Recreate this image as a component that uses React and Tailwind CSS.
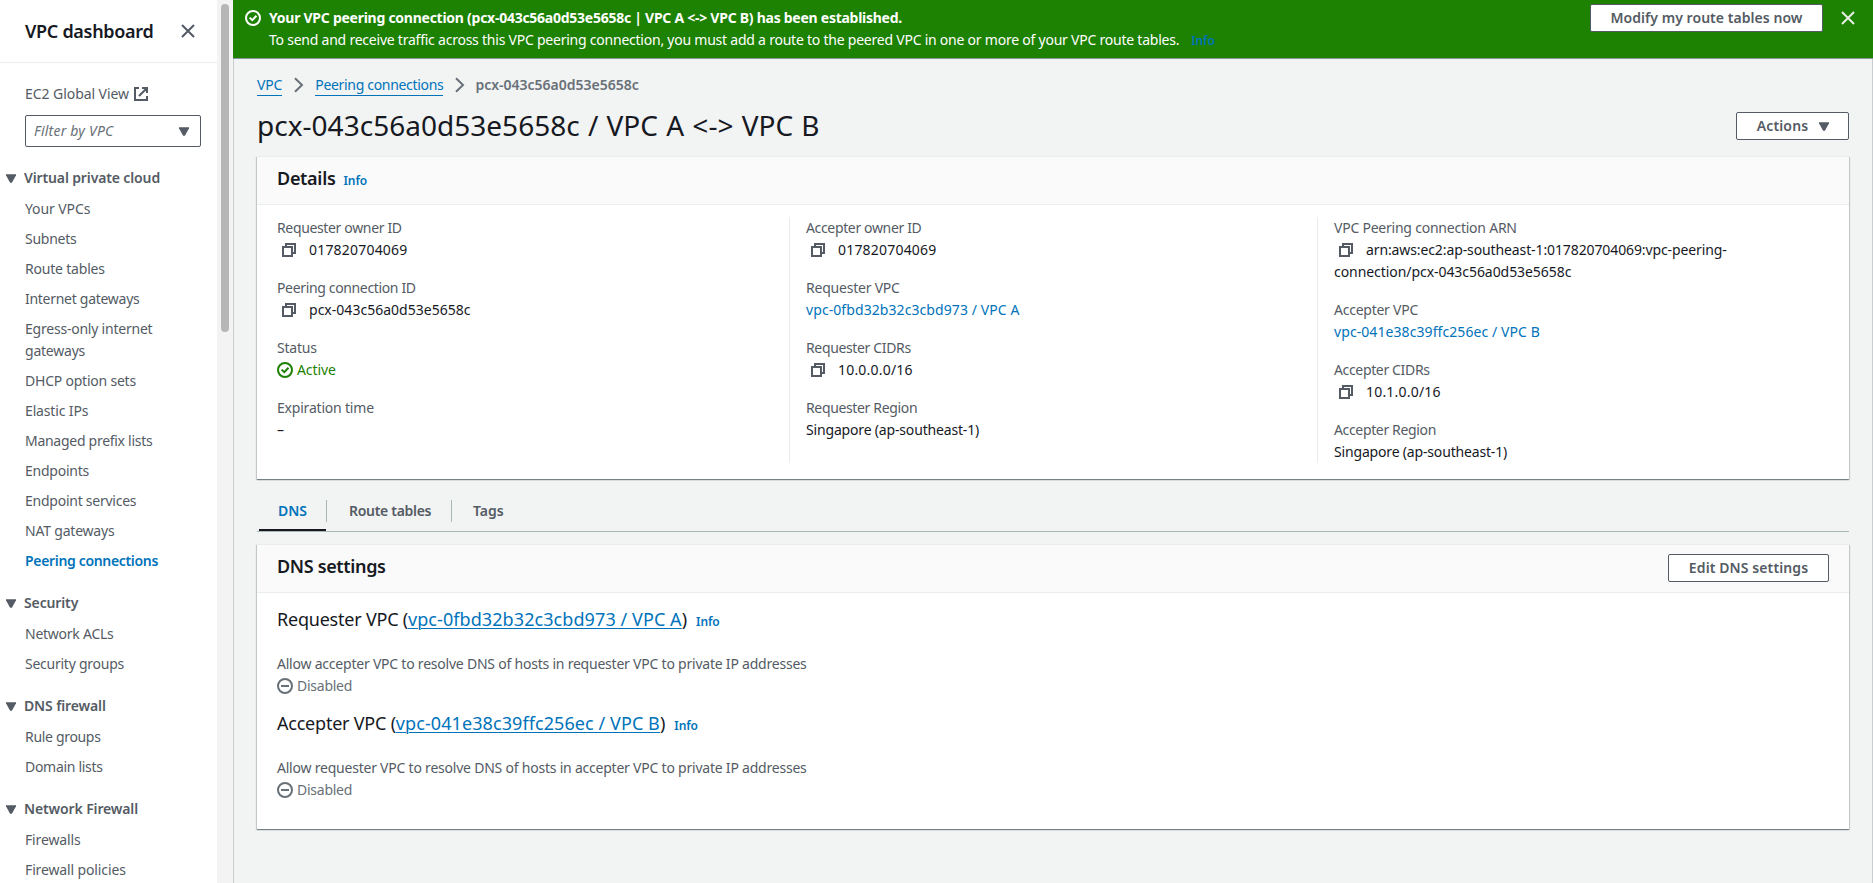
const CloseIcon = ({ className }) => (
  <svg viewBox="0 0 16 16" className={className} fill="none" stroke="currentColor" strokeWidth="2">
    <path d="M2 2l12 12M14 2L2 14" />
  </svg>
);

const Caret = ({ className = "" }) => (
  <svg viewBox="0 0 10 9" className={"h-[9px] w-[10px] shrink-0 " + className} fill="#545b64">
    <path d="M0 0.3h10v1L5.9 8.7h-1.8L0 1.3z" />
  </svg>
);

const ExternalIcon = () => (
  <svg viewBox="0 0 16 16" className="h-4 w-4 shrink-0" fill="none" stroke="#545b64" strokeWidth="2">
    <path d="M6 2H2v12h12v-4M9 2h5v5M6 10l8-8" />
  </svg>
);

const CopyIcon = () => (
  <svg viewBox="0 0 16 16" className="ml-1 mr-3 h-4 w-4 shrink-0" fill="none" stroke="#545b64" strokeWidth="2">
    <path d="M2 5h9v9H2z" />
    <path d="M5 5V2h9v9h-3" />
  </svg>
);

const CheckIcon = () => (
  <svg viewBox="0 0 16 16" className="h-4 w-4 shrink-0" fill="none" stroke="currentColor" strokeWidth="2">
    <circle cx="8" cy="8" r="7" />
    <path d="M4.6 7.6l2.7 2.6 4.2-4.4" />
  </svg>
);

const MinusIcon = () => (
  <svg viewBox="0 0 16 16" className="h-4 w-4 shrink-0" fill="none" stroke="currentColor" strokeWidth="2">
    <circle cx="8" cy="8" r="7" />
    <path d="M4 8h8" />
  </svg>
);

const Chevron = () => (
  <svg viewBox="0 0 10 16" className="h-4 w-[10px] shrink-0" fill="none" stroke="#687078" strokeWidth="2">
    <path d="M1 1.2l7 6.8-7 6.8" />
  </svg>
);

const sections = [
  {
    title: "Virtual private cloud",
    items: [
      ["Your VPCs", "tracking-[-0.1px]"],
      ["Subnets", "tracking-[-0.25px]"],
      ["Route tables", "tracking-[-0.2px]"],
      ["Internet gateways", "tracking-[-0.28px]"],
      ["Egress-only internet gateways", "tracking-[-0.22px]"],
      ["DHCP option sets", "tracking-[-0.22px]"],
      ["Elastic IPs", "tracking-[-0.15px]"],
      ["Managed prefix lists", "tracking-[-0.28px]"],
      ["Endpoints", "tracking-[-0.25px]"],
      ["Endpoint services", "tracking-[-0.25px]"],
      ["NAT gateways", "tracking-[-0.2px]"],
      ["Peering connections", "tracking-[-0.33px] font-semibold text-[#0073bb]"],
    ],
  },
  {
    title: "Security",
    items: [
      ["Network ACLs", "tracking-[-0.25px]"],
      ["Security groups", "tracking-[-0.25px]"],
    ],
  },
  {
    title: "DNS firewall",
    items: [
      ["Rule groups", "tracking-[-0.32px]"],
      ["Domain lists", "tracking-[-0.3px]"],
    ],
  },
  {
    title: "Network Firewall",
    items: [
      ["Firewalls", "tracking-[-0.15px]"],
      ["Firewall policies", "tracking-[-0.13px]"],
    ],
  },
];

function Sidebar() {
  return (
    <aside className="flex w-[217px] shrink-0 flex-col overflow-hidden bg-white">
      <header className="flex h-[63px] shrink-0 items-center justify-between border-b border-[#eaeded] pl-[25px] pr-[21px]">
        <h2 className="text-[18px] font-semibold leading-[22px] tracking-[-0.3px] text-[#16191f]">VPC dashboard</h2>
        <CloseIcon className="h-4 w-4 text-[#545b64]" />
      </header>
      <div className="flex items-center gap-1 pl-[25px] pt-5 leading-[22px]">
        <span className="tracking-[-0.06px]">EC2 Global View</span>
        <ExternalIcon />
      </div>
      <div className="ml-[25px] mt-[10px] flex h-8 w-[176px] shrink-0 items-center justify-between rounded-[2px] border border-[#545b64] pl-2 pr-[11px]">
        <span className="italic tracking-[0.22px] text-[#687078]">Filter by VPC</span>
        <Caret />
      </div>
      <nav className="mt-5 flex flex-col gap-5">
        {sections.map((s) => (
          <div key={s.title}>
            <div className="mb-[9px] flex items-center gap-2 pl-[6px] leading-[22px]">
              <Caret />
              <span className="font-semibold tracking-[-0.13px]">{s.title}</span>
            </div>
            <ul className="flex flex-col gap-2 pl-[25px]">
              {s.items.map(([t, c]) => (
                <li key={t} className={"max-w-[150px] leading-[22px] " + c}>{t}</li>
              ))}
            </ul>
          </div>
        ))}
      </nav>
    </aside>
  );
}

function Button({ className, children }) {
  return (
    <button className={"flex h-7 shrink-0 items-center justify-center rounded-[2px] border border-[#545b64] bg-white font-semibold text-[#545b64] " + className}>
      {children}
    </button>
  );
}

function Field({ label, track = "tracking-[-0.35px]", children }) {
  return (
    <div>
      <div className={"text-[#545b64] " + track}>{label}</div>
      {children}
    </div>
  );
}

const Copyable = ({ children, className = "tracking-[0.2px]" }) => (
  <div className="flex items-center">
    <CopyIcon />
    <span className={className}>{children}</span>
  </div>
);

const card =
  "border-t border-[#eaeded] bg-white shadow-[0_1px_1px_0_rgba(0,28,36,0.34),1px_1px_1px_0_rgba(0,28,36,0.15),-1px_1px_1px_0_rgba(0,28,36,0.15)]";

const Info = ({ className = "" }) => (
  <span className={"text-[12px] font-semibold tracking-[-0.1px] text-[#0073bb] " + className}>Info</span>
);

function DnsBlock({ name, link, text }) {
  return (
    <section>
      <h3 className="flex items-baseline text-[18px] text-[#16191f]">
        <span className="tracking-[-0.22px]">{name} VPC (</span>
        <a className="tracking-[0.08px] text-[#0073bb] underline decoration-1 underline-offset-2">{link}</a>
        <span>)</span>
        <Info className="ml-[9px]" />
      </h3>
      <p className="mt-5 tracking-[-0.22px]">{text}</p>
      <div className="flex items-center gap-1 text-[#687078]">
        <MinusIcon />
        <span className="tracking-[-0.25px]">Disabled</span>
      </div>
    </section>
  );
}

export default function App() {
  return (
    <div className="flex h-[883px] w-[1873px] overflow-hidden bg-[#f2f3f3] font-['Noto_Sans','Open_Sans',sans-serif] text-[14px] leading-[22px] text-[#545b64]">
      <Sidebar />
      <div className="w-4 shrink-0 bg-[#f3f3f3] px-1 pt-1">
        <div className="h-[328px] w-2 rounded-full bg-[#b6b6b6]" />
      </div>
      <main className="flex min-w-0 flex-1 flex-col">
        <div className="flex h-[59px] shrink-0 items-start border-b border-[#879596] bg-[#1d8102] pl-3 pr-[17px] text-white">
          <div className="flex h-9 items-center">
            <CheckIcon />
          </div>
          <div className="ml-2 flex-1 pt-[7px]">
            <div className="font-bold tracking-[-0.26px]">
              Your VPC peering connection (pcx-043c56a0d53e5658c | VPC A &lt;-&gt; VPC B) has been established.
            </div>
            <div className="flex items-baseline tracking-[-0.23px]">
              To send and receive traffic across this VPC peering connection, you must add a route to the peered VPC in one or more of your VPC route tables.
              <Info className="ml-3" />
            </div>
          </div>
          <Button className="mt-1 w-[233px] tracking-[0.05px]">Modify my route tables now</Button>
          <CloseIcon className="ml-[17px] mt-[10px] h-4 w-4 text-[#e6f0e2]" />
        </div>
        <div className="flex flex-1 flex-col border-x border-[#c9cdcf] px-[23px]">
          <div className="mt-[15px] flex h-[22px] items-center">
            <a className="border-b border-[#0073bb] leading-[20px] tracking-[-0.15px] text-[#0073bb]">VPC</a>
            <span className="ml-3 mr-[11px]"><Chevron /></span>
            <a className="border-b border-[#0073bb] leading-[20px] tracking-[-0.32px] text-[#0073bb]">Peering connections</a>
            <span className="ml-3 mr-[10px]"><Chevron /></span>
            <span className="font-semibold tracking-[0px] text-[#687078]">pcx-043c56a0d53e5658c</span>
          </div>
          <div className="mt-3 flex h-[36px] items-center justify-between">
            <h1 className="pb-[2px] text-[28px] leading-[34px] tracking-[0.02px] text-[#16191f] [word-spacing:0.9px]">
              pcx-043c56a0d53e5658c / VPC A &lt;-&gt; VPC B
            </h1>
            <Button className="w-[113px] gap-[11px] pl-px tracking-[0.15px]">
              Actions <Caret />
            </Button>
          </div>
          <section className={"mt-3 h-[323px] shrink-0 " + card}>
            <header className="flex h-[48px] items-baseline border-b border-[#eaeded] bg-[#fafafa] pl-5 pt-[10px]">
              <h2 className="text-[18px] font-semibold leading-[22px] tracking-[-0.3px] text-[#16191f]">Details</h2>
              <Info className="ml-2" />
            </header>
            <div className="mt-3 flex h-[246px] text-[#16191f]">
              <div className="flex w-[532px] flex-col gap-4 pl-5">
                <Field label="Requester owner ID"><Copyable>017820704069</Copyable></Field>
                <Field label="Peering connection ID"><Copyable className="tracking-[0.02px]">pcx-043c56a0d53e5658c</Copyable></Field>
                <Field label="Status" track="tracking-[-0.2px]">
                  <div className="flex items-center gap-1 text-[#1d8102]">
                    <CheckIcon />
                    <span className="tracking-[-0.1px]">Active</span>
                  </div>
                </Field>
                <Field label="Expiration time" track="tracking-[-0.2px]"><div>–</div></Field>
              </div>
              <div className="flex w-[528px] flex-col gap-4 border-l border-[#eaeded] pl-4">
                <Field label="Accepter owner ID"><Copyable>017820704069</Copyable></Field>
                <Field label="Requester VPC" track="tracking-[-0.22px]"><div className="tracking-[0.08px] text-[#0073bb]">vpc-0fbd32b32c3cbd973 / VPC A</div></Field>
                <Field label="Requester CIDRs"><Copyable>10.0.0.0/16</Copyable></Field>
                <Field label="Requester Region"><div className="tracking-[-0.17px]">Singapore (ap-southeast-1)</div></Field>
              </div>
              <div className="flex flex-1 flex-col gap-4 border-l border-[#eaeded] pl-4">
                <Field label="VPC Peering connection ARN" track="tracking-[-0.23px]">
                  <Copyable className="tracking-[-0.11px]">arn:aws:ec2:ap-southeast-1:017820704069:vpc-peering-</Copyable>
                  <div className="tracking-[-0.06px]">connection/pcx-043c56a0d53e5658c</div>
                </Field>
                <Field label="Accepter VPC" track="tracking-[-0.25px]"><div className="tracking-[0.08px] text-[#0073bb]">vpc-041e38c39ffc256ec / VPC B</div></Field>
                <Field label="Accepter CIDRs"><Copyable>10.1.0.0/16</Copyable></Field>
                <Field label="Accepter Region"><div className="tracking-[-0.17px]">Singapore (ap-southeast-1)</div></Field>
              </div>
            </div>
          </section>
          <div className="mt-[21px] flex h-[32px] shrink-0 items-stretch border-b border-[#aab7b8] pl-[2px] font-semibold">
            <div className="w-[67px] border-b-2 border-[#16191f] pl-[19px] text-[#0073bb]">DNS</div>
            <div className="h-[22px] w-[125px] border-l border-[#aab7b8] pl-[22px] tracking-[-0.3px]">Route tables</div>
            <div className="h-[22px] border-l border-[#aab7b8] pl-[21px]">Tags</div>
          </div>
          <section className={"mt-3 h-[285px] shrink-0 " + card}>
            <header className="flex h-[48px] items-start justify-between border-b border-[#eaeded] bg-[#fafafa] px-5 pt-[9px]">
              <h2 className="mt-px text-[18px] font-semibold leading-[22px] tracking-[-0.35px] text-[#16191f]">DNS settings</h2>
              <Button className="w-[161px] tracking-[0.1px]">Edit DNS settings</Button>
            </header>
            <div className="flex flex-col gap-[15px] pl-5 pt-[15px]">
              <DnsBlock
                name="Requester"
                link="vpc-0fbd32b32c3cbd973 / VPC A"
                text="Allow accepter VPC to resolve DNS of hosts in requester VPC to private IP addresses"
              />
              <DnsBlock
                name="Accepter"
                link="vpc-041e38c39ffc256ec / VPC B"
                text="Allow requester VPC to resolve DNS of hosts in accepter VPC to private IP addresses"
              />
            </div>
          </section>
        </div>
      </main>
    </div>
  );
}
